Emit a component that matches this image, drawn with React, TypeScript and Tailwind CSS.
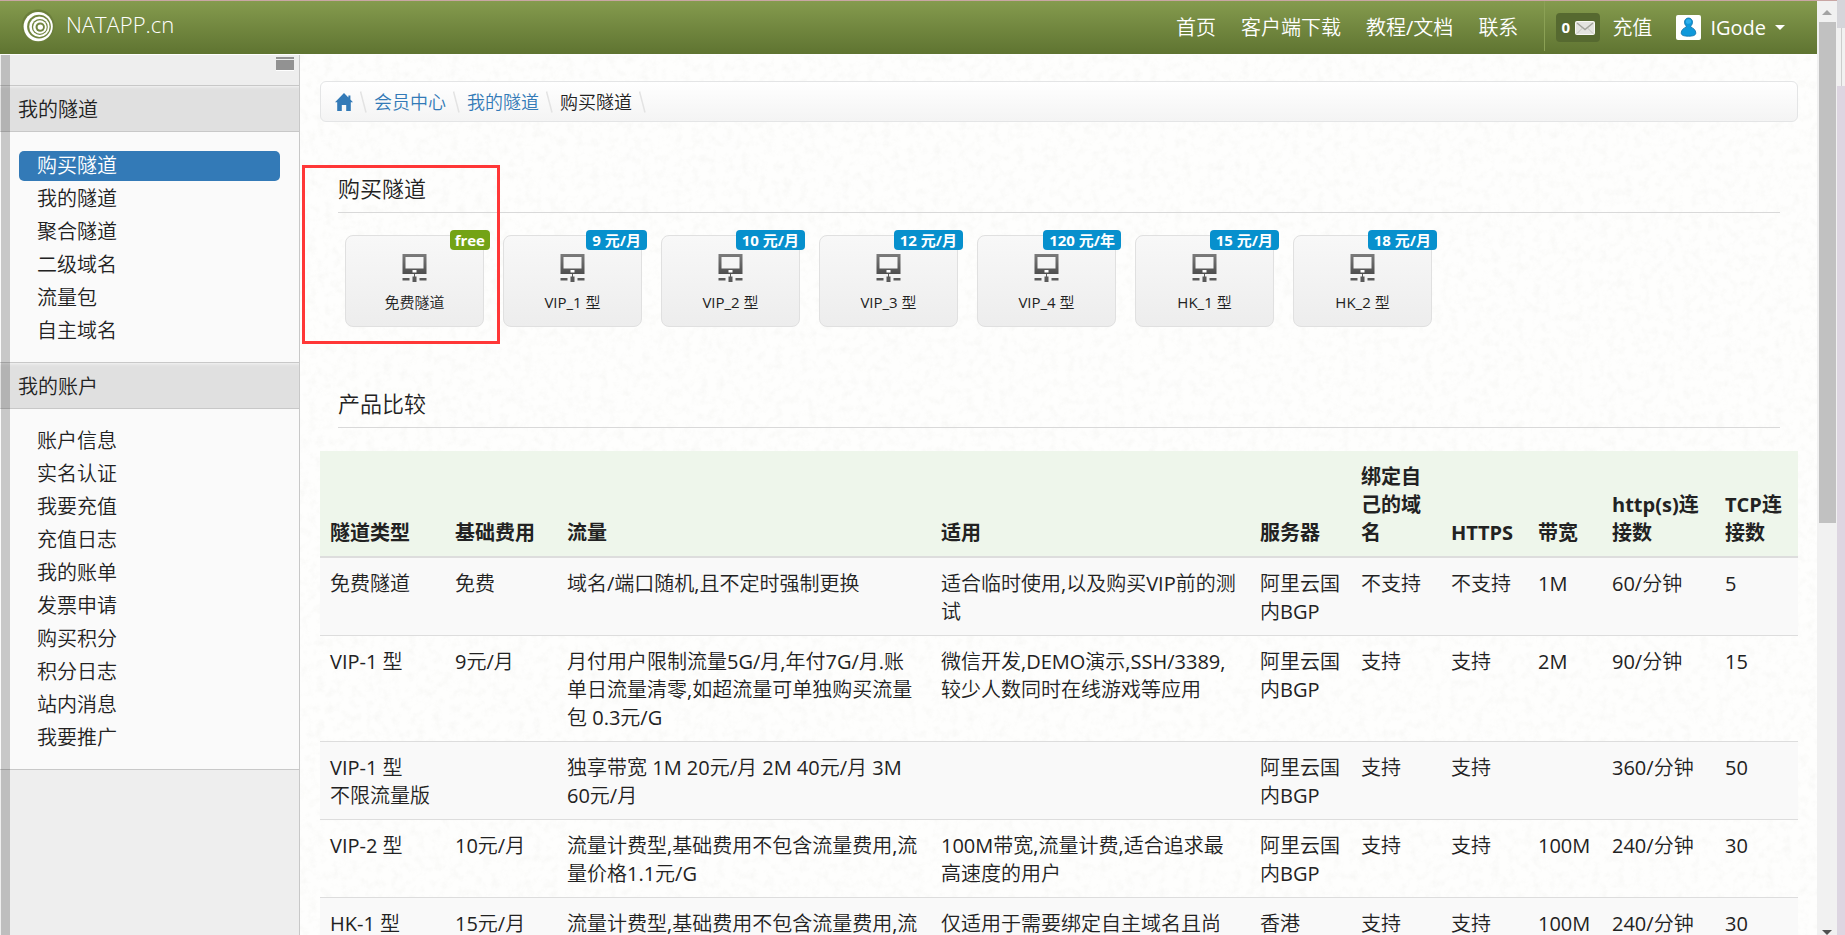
import React from "react";

type Plan = { name: string; price: string; free?: boolean };

const tunnelLinks = ["购买隧道", "我的隧道", "聚合隧道", "二级域名", "流量包", "自主域名"];
const accountLinks = [
  "账户信息", "实名认证", "我要充值", "充值日志", "我的账单",
  "发票申请", "购买积分", "积分日志", "站内消息", "我要推广",
];

const plans: Plan[] = [
  { name: "免费隧道", price: "free", free: true },
  { name: "VIP_1 型", price: "9 元/月" },
  { name: "VIP_2 型", price: "10 元/月" },
  { name: "VIP_3 型", price: "12 元/月" },
  { name: "VIP_4 型", price: "120 元/年" },
  { name: "HK_1 型", price: "15 元/月" },
  { name: "HK_2 型", price: "18 元/月" },
];

const columns = [
  { title: "隧道类型", width: "w-[125px]" },
  { title: "基础费用", width: "w-[112px]" },
  { title: "流量", width: "w-[374px]" },
  { title: "适用", width: "" },
  { title: "服务器", width: "w-[101px]" },
  { title: "绑定自己的域名", width: "w-[90px]" },
  { title: "HTTPS", width: "w-[87px]" },
  { title: "带宽", width: "w-[74px]" },
  { title: "http(s)连接数", width: "w-[113px]" },
  { title: "TCP连接数", width: "w-[83px]" },
];

const rows: string[][] = [
  ["免费隧道", "免费", "域名/端口随机,且不定时强制更换", "适合临时使用,以及购买VIP前的测试", "阿里云国内BGP", "不支持", "不支持", "1M", "60/分钟", "5"],
  ["VIP-1 型", "9元/月", "月付用户限制流量5G/月,年付7G/月.账单日流量清零,如超流量可单独购买流量包 0.3元/G", "微信开发,DEMO演示,SSH/3389,较少人数同时在线游戏等应用", "阿里云国内BGP", "支持", "支持", "2M", "90/分钟", "15"],
  ["VIP-1 型\n不限流量版", "", "独享带宽 1M 20元/月 2M 40元/月 3M 60元/月", "", "阿里云国内BGP", "支持", "支持", "", "360/分钟", "50"],
  ["VIP-2 型", "10元/月", "流量计费型,基础费用不包含流量费用,流量价格1.1元/G", "100M带宽,流量计费,适合追求最高速度的用户", "阿里云国内BGP", "支持", "支持", "100M", "240/分钟", "30"],
  ["HK-1 型", "15元/月", "流量计费型,基础费用不包含流量费用,流", "仅适用于需要绑定自主域名且尚", "香港", "支持", "支持", "100M", "240/分钟", "30"],
];

function Logo() {
  return (
    <svg className="size-[34px]" viewBox="0 0 34 34" aria-hidden="true">
      <circle cx="17" cy="17" r="16.5" fill="#6b7f3b" />
      <circle cx="17.2" cy="17.6" r="14.6" fill="#fff" />
      <circle cx="18" cy="17.6" r="11.9" fill="#71853f" />
      <circle cx="18.4" cy="17.8" r="10.2" fill="#fff" />
      <circle cx="18.8" cy="17.9" r="8" fill="#71853f" />
      <circle cx="18.9" cy="18" r="6.8" fill="#fff" />
      <circle cx="19.2" cy="18.1" r="4.7" fill="#71853f" />
      <circle cx="19.3" cy="18.1" r="2.7" fill="#fff" />
    </svg>
  );
}

function Envelope() {
  return (
    <svg className="h-[14px] w-5" viewBox="0 0 20 14" aria-hidden="true">
      <rect x="0.5" y="0.5" width="19" height="13" rx="1" fill="#e4e4e0" stroke="#f8f8f4" />
      <path d="M2 2l8 6.5L18 2" fill="none" stroke="#a3a49c" strokeWidth="1.5" />
      <path d="M2 12.5l5.5-5.5M18 12.5L12.5 7" fill="none" stroke="#c4c5be" strokeWidth="1" />
    </svg>
  );
}

function Avatar() {
  return (
    <svg className="size-[25px]" viewBox="0 0 25 25" aria-hidden="true">
      <rect width="25" height="25" rx="2" fill="#fff" />
      <path
        d="M12.5 3a4 4 0 0 0-4 4.200c0 1.700.8 2.900 1.700 3.800v1.200c-2.800.9-5 3-5 5.800 0 2.400 2.800 3.200 7.300 3.200s7.300-.8 7.300-3.200c0-2.800-2.200-4.900-5-5.800V11c.9-.9 1.700-2.100 1.700-3.800A4 4 0 0 0 12.500 3z"
        fill="#0f98da"
        stroke="#0a6ea8"
        strokeWidth="0.8"
      />
      <ellipse cx="12.500" cy="6.500" rx="2.600" ry="2.300" fill="#2fb0ec" />
    </svg>
  );
}

function HomeIcon() {
  return (
    <svg className="size-[18px]" viewBox="0 0 18 18" aria-hidden="true">
      <path d="M9 0L0 9.200h2.200V18h4.600v-6h4.400v6h4.600V9.200H18L15.400 6.500V2.500h-2v2z" fill="#337ab7" />
    </svg>
  );
}

function TunnelIcon() {
  return (
    <svg className="h-7 w-[25px]" viewBox="0 0 25 28" aria-hidden="true">
      <defs>
        <linearGradient id="screen" x1="0" y1="0" x2="0" y2="1">
          <stop offset="0" stopColor="#7c7c7c" />
          <stop offset="1" stopColor="#4e4e4e" />
        </linearGradient>
      </defs>
      <path fillRule="evenodd" d="M.5 0h24v20H.5zM3.500 3v11.500h18V3z" fill="url(#screen)" />
      <rect x="10.500" y="16" width="4" height="2.500" fill="#fff" />
      <path d="M12 20h1v3h-1zM10.500 22.500h4V28h-4zM.5 24h7v2.500h-7zM17.500 24h7v2.500h-7z" fill="#5a5a5a" />
    </svg>
  );
}

function Slash() {
  return (
    <svg className="h-[22px] w-[7px]" viewBox="0 0 7 22" aria-hidden="true">
      <path d="M.5 0.500L6 21.500" stroke="#e3e3e3" strokeWidth="1.500" />
    </svg>
  );
}

function PaperTexture() {
  return (
    <svg className="pointer-events-none absolute inset-0 -z-10 h-full w-full" aria-hidden="true">
      <filter id="paper" x="0" y="0" width="100%" height="100%">
        <feTurbulence type="fractalNoise" baseFrequency="0.12" numOctaves="4" seed="4" />
        <feColorMatrix type="matrix" values="0 0 0 0 0.55  0 0 0 0 0.55  0 0 0 0 0.5  0.7 0 0 0 -0.31" />
      </filter>
      <rect width="100%" height="100%" filter="url(#paper)" opacity="0.3" />
    </svg>
  );
}

function NavGroup({ title, links, active, spacing }: { title: string; links: string[]; active?: string; spacing: string }) {
  return (
    <section>
      <h2 className="flex h-[46px] items-center border-b border-[#c8c8c8] bg-[#e0e0e0] pt-0.5 pl-[18px] text-xl shadow-[inset_0_3px_3px_-2px_#f4f4f4]">
        {title}
      </h2>
      <ul className={`border-b border-[#c8c8c8] bg-[#fafafa] pr-[19px] pl-[19px] ${spacing}`}>
        {links.map((link) => (
          <li key={link} className="flex h-[33px] items-center">
            <a
              href="#"
              className={`flex h-[30px] w-full items-center rounded-[5px] pl-[18px] text-xl ${
                link === active ? "bg-[#337ab7] text-white" : ""
              }`}
            >
              {link}
            </a>
          </li>
        ))}
      </ul>
    </section>
  );
}

function SectionTitle({ children }: { children: React.ReactNode }) {
  return (
    <h2 className="mx-[18px] flex h-[46px] items-center border-b border-[#d9d9d9] pb-0.5 text-[22px]">{children}</h2>
  );
}

export default function App() {
  return (
    <div className="flex h-screen overflow-hidden bg-white font-['Open_Sans','Noto_Sans_CJK_SC_DemiLight','Noto_Sans_CJK_SC',sans-serif] font-normal text-[#222]">
      <div className="flex min-w-0 flex-1 border-t border-[#c9a6a4]">
        <div className="flex min-w-0 flex-1 flex-col">
          <header className="flex h-[54px] shrink-0 items-center border-b border-white bg-linear-to-b from-[#859b4e] to-[#5f7431] pl-[21px] text-white">
            <a href="#" className="flex items-center gap-[11px] pb-[3px] text-[22px] font-light">
              <Logo />
              <span className="pb-1">NATAPP.cn</span>
            </a>
            <nav className="ml-auto flex h-full items-center text-xl">
              <div className="flex items-center gap-[25px] pr-[26px]">
                <a href="#">首页</a>
                <a href="#">客户端下载</a>
                <a href="#">教程/文档</a>
                <a href="#">联系</a>
              </div>
              <span className="mr-[11px] h-[50px] w-px self-start border-r border-[#8ba155] bg-[#5f7431]" />
              <a href="#" className="flex h-[29px] w-11 items-center justify-center gap-[5px] rounded bg-[#566930] text-[15px] font-bold">
                0
                <Envelope />
              </a>
              <a href="#" className="ml-3">充值</a>
              <button type="button" className="mr-8 ml-6 flex items-center gap-[9px]">
                <Avatar />
                IGode
                <span className="h-0 w-0 border-x-[5px] border-t-[5px] border-x-transparent border-t-white" />
              </button>
            </nav>
          </header>

          <div className="flex min-h-0 flex-1">
            <aside className="relative w-[300px] shrink-0 border-r border-[#c8c8c8] bg-[#eee]">
              <div className="flex h-[31px] justify-end border-b border-[#c8c8c8] pt-0.5 pr-[5px]">
                <button type="button" aria-label="收起菜单" className="flex h-[13px] w-[18px] flex-col gap-px">
                  <span className="h-0.5 w-full bg-[#929292]" />
                  <span className="w-full flex-1 bg-[#929292] shadow-[0_1px_0_#fff]" />
                </button>
              </div>
              <NavGroup title="我的隧道" links={tunnelLinks} active="购买隧道" spacing="pt-[17px] pb-[15px]" />
              <NavGroup title="我的账户" links={accountLinks} spacing="pt-[15px] pb-[15px]" />
              <div className="pointer-events-none absolute top-0 bottom-0 left-px w-[9px] bg-black/20" />
            </aside>

            <main className="relative isolate min-w-0 flex-1 overflow-hidden bg-[#fefefd] px-5 pt-[26px] pr-[19px]">
              <PaperTexture />
              <nav className="flex h-[41px] items-center gap-[7px] rounded-md border border-[#e4e5e6] bg-linear-to-b from-white to-[#f4f4f4] pl-[14px] text-lg">
                <a href="#" aria-label="首页"><HomeIcon /></a>
                <Slash />
                <a href="#" className="text-[#337ab7]">会员中心</a>
                <Slash />
                <a href="#" className="text-[#337ab7]">我的隧道</a>
                <Slash />
                <span>购买隧道</span>
                <Slash />
              </nav>

              <section className="relative mt-[45px]">
                <SectionTitle>购买隧道</SectionTitle>
                <div className="flex flex-wrap gap-[19px] px-[25px] pt-[22px]">
                  {plans.map((plan) => (
                    <a
                      key={plan.name}
                      href="#"
                      className="relative flex h-[92px] w-[139px] flex-col items-center gap-[9px] rounded-lg border border-[#e0e0e0] bg-linear-to-b from-[#f8f8f8] to-[#ededed] pt-[18px] text-[15px] leading-[22px]"
                    >
                      <TunnelIcon />
                      {plan.name}
                      <span
                        className={`absolute -top-1.5 rounded font-['Open_Sans','Noto_Sans_CJK_SC',sans-serif] text-[15px] leading-5 font-bold text-white ${
                          plan.free ? "-right-[7px] bg-[#73a316] px-[5px]" : "-right-1.5 bg-[#0790cd] px-1.5"
                        }`}
                      >
                        {plan.price}
                      </span>
                    </a>
                  ))}
                </div>
                <div className="pointer-events-none absolute -top-0.5 -left-[18px] h-[179px] w-[198px] border-3 border-[#ff3737]" />
              </section>

              <section className="mt-[55px]">
                <SectionTitle>产品比较</SectionTitle>
                <table className="mt-[23px] w-full table-fixed text-left text-xl leading-7">
                  <colgroup>
                    {columns.map((column) => (
                      <col key={column.title} className={column.width} />
                    ))}
                  </colgroup>
                  <thead className="font-['Open_Sans','Noto_Sans_CJK_SC',sans-serif]">
                    <tr className="border-b-2 border-[#ddd] bg-[#eef6eb]">
                      {columns.map((column) => (
                        <th key={column.title} scope="col" className="px-[10px] pt-3 pb-[9px] align-bottom font-bold">
                          {column.title}
                        </th>
                      ))}
                    </tr>
                  </thead>
                  <tbody>
                    {rows.map((row, index) => (
                      <tr key={index} className="border-b border-[#ddd] odd:bg-[#f9f9f9]">
                        {row.map((cell, cellIndex) => (
                          <td key={cellIndex} className="px-[10px] pt-3 pb-[9px] align-top whitespace-pre-line">
                            {cell}
                          </td>
                        ))}
                      </tr>
                    ))}
                  </tbody>
                </table>
              </section>
            </main>
          </div>
        </div>

        <div className="flex w-5 shrink-0 flex-col items-center bg-[#f1f1f1]" aria-hidden="true">
          <span className="mt-[9px] border-x-[5px] border-b-[5px] border-x-transparent border-b-[#a3a3a3]" />
          <span className="mt-[7px] h-[501px] w-[17px] bg-[#c1c1c1]" />
          <span className="mt-auto border-x-[5px] border-t-[5px] border-x-transparent border-t-[#505050]" />
        </div>
      </div>
      <div className="flex w-2 shrink-0 flex-col bg-[#ddd5e1]" aria-hidden="true">
        <span className="h-7 bg-[#d5d5da]" />
        <span className="flex h-[58px] bg-[#f1f1f1] pl-1">
          <span className="w-px bg-[#ccc]" />
        </span>
      </div>
    </div>
  );
}
